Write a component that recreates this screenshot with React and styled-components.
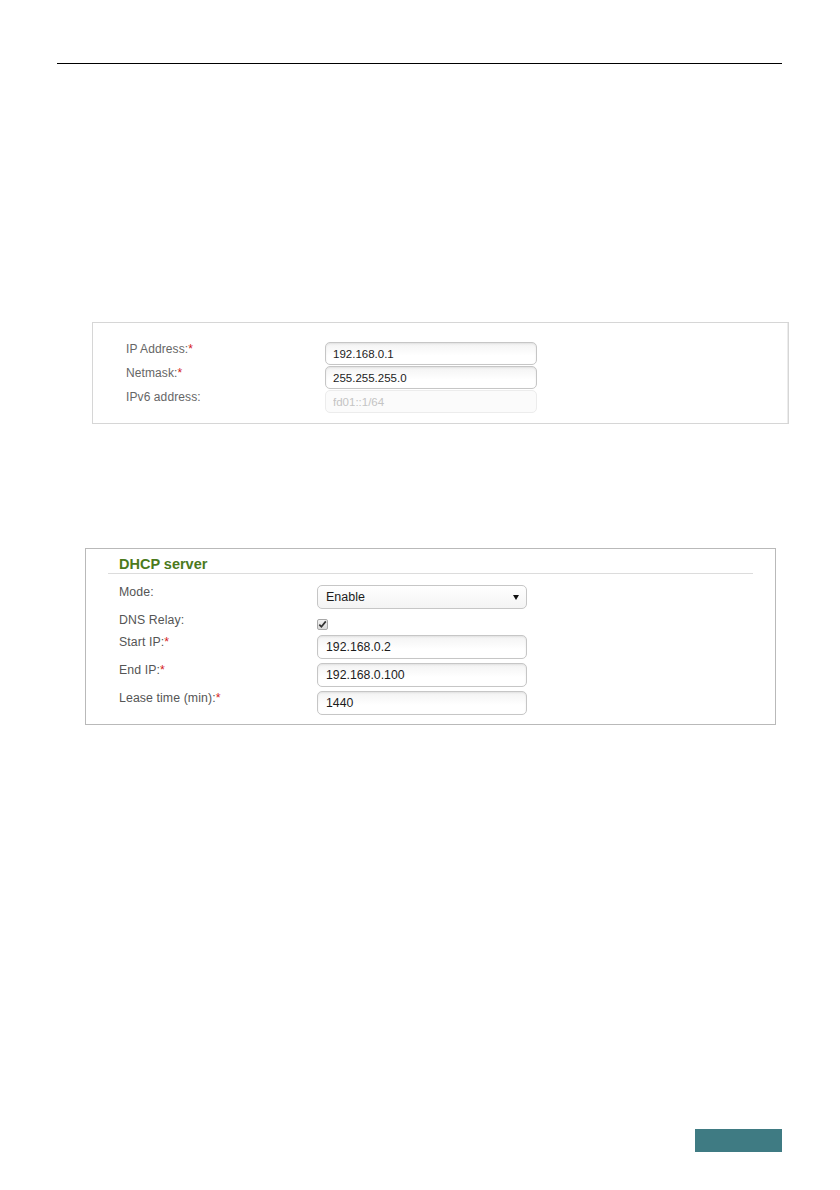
import React from 'react';
import styled, { createGlobalStyle } from 'styled-components';

const GlobalStyle = createGlobalStyle`
  html, body {
    margin: 0;
    padding: 0;
    background: #fff;
  }
  body {
    font-family: "Liberation Sans", Arial, sans-serif;
  }
`;

const Page = styled.div`
  width: 840px;
  min-height: 1190px;
  padding-top: 63px;
  box-sizing: border-box;
`;

const HeaderRule = styled.div`
  margin-left: 57px;
  width: 725px;
  border-top: 1px solid #000;
`;

const LanPanel = styled.div`
  box-sizing: border-box;
  margin: 258px 0 0 92px;
  width: 697px;
  padding: 19px 0 9px 33px;
  border: 1px solid #d6d6d6;
  box-shadow: inset -4px 0 0 -3px #ececec;
`;

const DhcpPanel = styled.div`
  box-sizing: border-box;
  margin: 124px 0 0 85px;
  width: 691px;
  padding: 0 0 9px 0;
  border: 1px solid #b9b9b9;
`;

const SectionHeader = styled.div`
  margin: 0 22px;
  padding: 6px 0 0 11px;
  border-bottom: 1px solid #dcdcdc;
  font-size: 14.5px;
  line-height: 18px;
  font-weight: bold;
  color: #4b7a1c;
`;

const FormGrid = styled.div`
  display: grid;
  grid-template-columns: ${(p) => p.$labelWidth}px ${(p) => p.$fieldWidth}px;
  grid-template-rows: ${(p) => p.$rows};
  row-gap: ${(p) => p.$gap}px;
  margin-top: ${(p) => p.$top || 0}px;
  padding-left: ${(p) => p.$indent || 0}px;
`;

const Label = styled.div`
  font-size: ${(p) => p.$size}px;
  line-height: 14px;
  color: ${(p) => p.$color};
  letter-spacing: 0.1px;
`;

const Required = styled.span`
  color: #d42020;
`;

const TextInput = styled.input`
  box-sizing: border-box;
  width: 100%;
  height: ${(p) => p.$height}px;
  margin: 0;
  padding: 0 0 0 ${(p) => p.$pad}px;
  border: 1px solid ${(p) => (p.disabled ? '#ececec' : '#c6c6c6')};
  border-radius: 5px;
  background: ${(p) =>
    p.disabled ? '#fbfbfb' : 'linear-gradient(#f3f3f3, #ffffff 60%)'};
  box-shadow: ${(p) => (p.disabled ? 'none' : 'inset 0 1px 2px rgba(0,0,0,0.08)')};
  font-family: "Liberation Sans", Arial, sans-serif;
  font-size: ${(p) => p.$size}px;
  color: ${(p) => (p.disabled ? '#c4c4c4' : '#1c1c1c')};
  outline: none;
`;

const SelectWrap = styled.div`
  position: relative;
  height: 24px;
`;

const Select = styled.select`
  box-sizing: border-box;
  width: 100%;
  height: 24px;
  margin: 0;
  padding: 0 0 0 8px;
  appearance: none;
  border: 1px solid #c6c6c6;
  border-radius: 5px;
  background: linear-gradient(#ffffff, #f4f4f4);
  font-family: "Liberation Sans", Arial, sans-serif;
  font-size: 12.5px;
  color: #1c1c1c;
  outline: none;
`;

const Arrow = styled.span`
  position: absolute;
  right: 8px;
  top: 10px;
  width: 0;
  height: 0;
  border-left: 3.5px solid transparent;
  border-right: 3.5px solid transparent;
  border-top: 5px solid #111;
  pointer-events: none;
`;

const CheckBox = styled.span`
  display: block;
  box-sizing: border-box;
  width: 11px;
  height: 11px;
  margin-top: 6px;
  border: 1px solid #a8a8a8;
  border-radius: 2px;
  background: linear-gradient(#f2f2f2, #d9d9d9);
  svg {
    display: block;
  }
`;

const Footer = styled.div`
  margin: 404px 0 0 695px;
  width: 87px;
  height: 23px;
  background: #3f7b83;
`;

const CheckMark = () => (
  <svg width="9" height="9" viewBox="0 0 9 9">
    <path d="M1.3 4.6 L3.4 6.8 L7.8 1.4" fill="none" stroke="#333" strokeWidth="1.7" />
  </svg>
);

const lanFields = [
  { label: 'IP Address:', required: true, value: '192.168.0.1' },
  { label: 'Netmask:', required: true, value: '255.255.255.0' },
  { label: 'IPv6 address:', required: false, value: 'fd01::1/64', disabled: true },
];

const dhcpInputs = [
  { label: 'Start IP:', value: '192.168.0.2' },
  { label: 'End IP:', value: '192.168.0.100' },
  { label: 'Lease time (min):', value: '1440' },
];

const App = () => {
  return (
    <>
      <GlobalStyle />
      <Page>
        <HeaderRule />

        <LanPanel>
          <FormGrid $labelWidth={199} $fieldWidth={212} $rows="repeat(3, 24px)" $gap={0}>
            {lanFields.map((f) => (
              <React.Fragment key={f.label}>
                <Label $size={12} $color="#666">
                  {f.label}
                  {f.required && <Required>*</Required>}
                </Label>
                <TextInput
                  readOnly
                  defaultValue={f.value}
                  disabled={f.disabled}
                  $height={23}
                  $pad={7}
                  $size={11.5}
                />
              </React.Fragment>
            ))}
          </FormGrid>
        </LanPanel>

        <DhcpPanel>
          <SectionHeader>DHCP server</SectionHeader>
          <FormGrid
            $labelWidth={198}
            $fieldWidth={210}
            $rows="24px 18px 24px 24px 24px"
            $gap={4}
            $top={11}
            $indent={33}
          >
            <Label $size={12.3} $color="#555">Mode:</Label>
            <SelectWrap>
              <Select defaultValue="enable">
                <option value="enable">Enable</option>
                <option value="disable">Disable</option>
              </Select>
              <Arrow />
            </SelectWrap>

            <Label $size={12.3} $color="#555">DNS Relay:</Label>
            <div>
              <CheckBox>
                <CheckMark />
              </CheckBox>
            </div>

            {dhcpInputs.map((f) => (
              <React.Fragment key={f.label}>
                <Label $size={12.3} $color="#555">
                  {f.label}
                  <Required>*</Required>
                </Label>
                <TextInput readOnly defaultValue={f.value} $height={24} $pad={8} $size={12.3} />
              </React.Fragment>
            ))}
          </FormGrid>
        </DhcpPanel>

        <Footer />
      </Page>
    </>
  );
};

export default App;
